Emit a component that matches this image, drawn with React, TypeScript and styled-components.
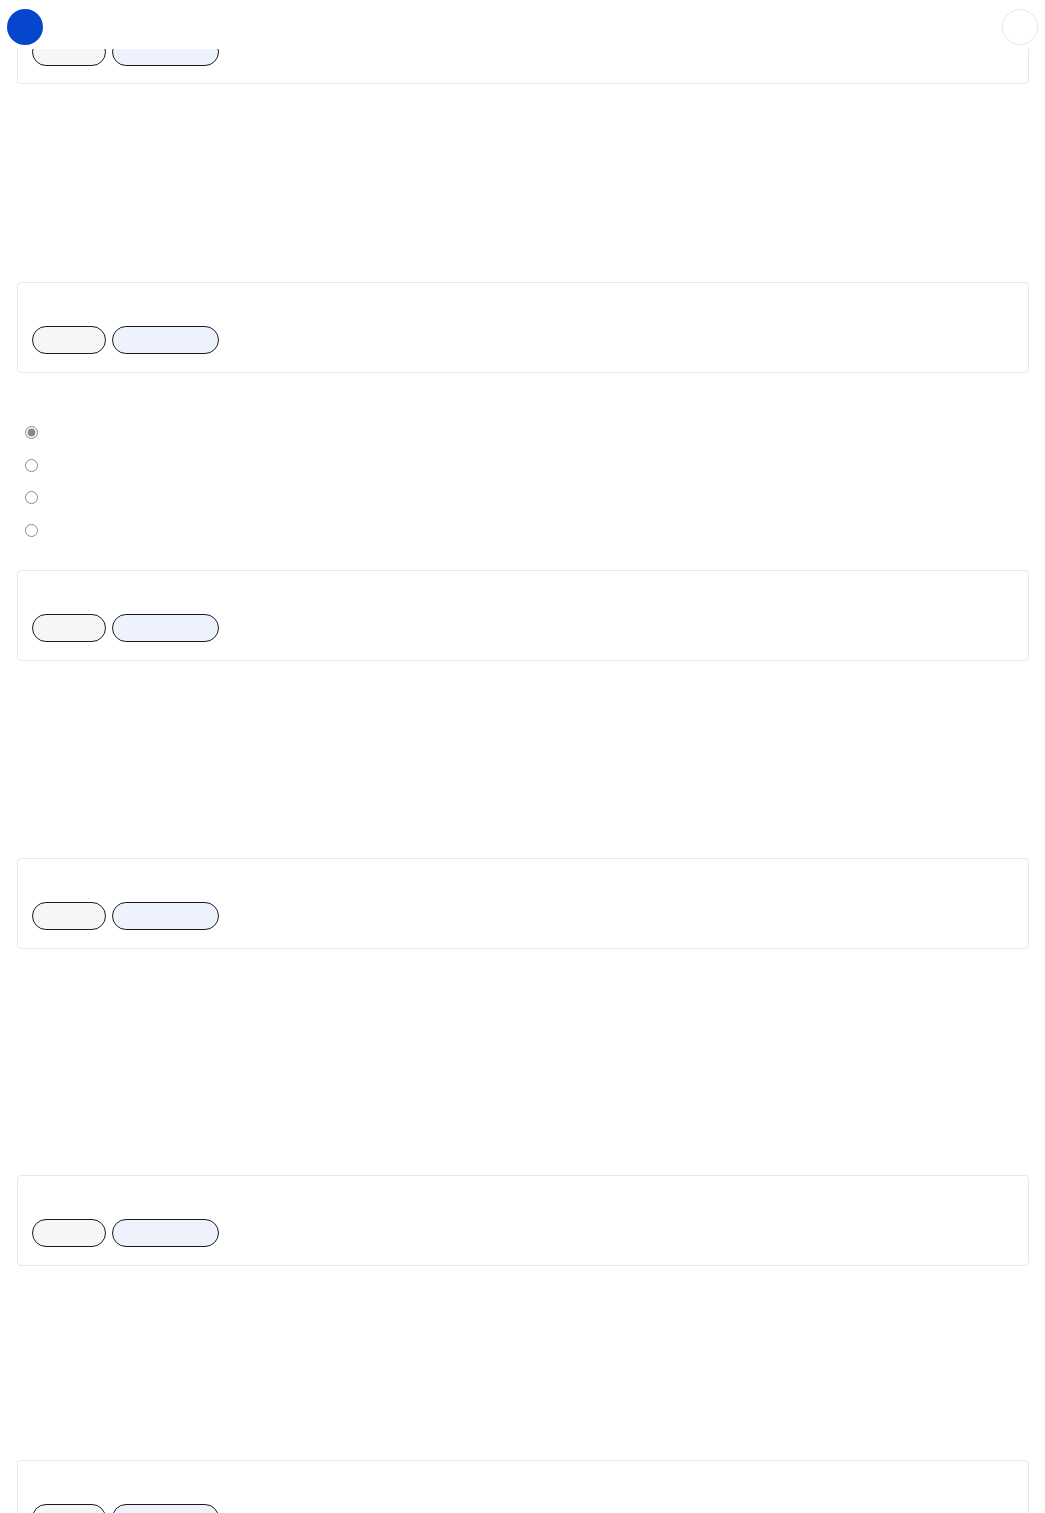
import React from 'react';
import styled, { createGlobalStyle } from 'styled-components';

const GlobalStyle = createGlobalStyle`
	html, body {
		margin: 0;
		padding: 0;
		background: #ffffff;
		font-family: 'Noto Sans', 'Liberation Sans', sans-serif;
	}
`;

const Header = () => (
	<StyledHeader>
		<Avatar />
		<ProfileButton />
	</StyledHeader>
);

const Card = ({ first = false }: { first?: boolean }) => (
	<StyledCard $first={first}>
		<CardTitle />
		<ButtonRow>
			<PillButton $variant="default" $width={74} />
			<PillButton $variant="primary" $width={107} />
		</ButtonRow>
	</StyledCard>
);

const OPTIONS = ['one', 'two', 'three', 'four'];

const App = () => {
	return (
		<>
			<GlobalStyle />
			<Header />
			<Page>
				<Card first />
				<Spacer $height={198} />
				<Card />
				<RadioSection>
					{OPTIONS.map((option, index) => (
						<RadioRow key={`radio-${option}`}>
							<input type="radio" name="choice" defaultChecked={index === 0} />
						</RadioRow>
					))}
				</RadioSection>
				<Card />
				<Spacer $height={197} />
				<Card />
				<Spacer $height={226} />
				<Card />
				<Spacer $height={194} />
				<Card />
			</Page>
		</>
	);
};

const StyledHeader = styled.header`
	position: fixed;
	top: 0;
	left: 0;
	right: 0;
	z-index: 10;
	height: 49px;
	box-sizing: border-box;
	padding: 9px 7px 0 7px;
	display: flex;
	align-items: flex-start;
	justify-content: space-between;
	background: #ffffff;
`;

const Avatar = styled.div`
	width: 36px;
	height: 36px;
	border-radius: 50%;
	background: #0646cd;
`;

const ProfileButton = styled.div`
	width: 36px;
	height: 36px;
	box-sizing: border-box;
	border-radius: 50%;
	border: 1px solid #e6e6e6;
	background: #ffffff;
`;

const Page = styled.main`
	display: flex;
	flex-direction: column;
	padding: 0 16px 0 17px;
`;

const StyledCard = styled.section<{ $first: boolean }>`
	display: flex;
	flex-direction: column;
	box-sizing: border-box;
	border: 1px solid #e8e8e8;
	border-radius: 4px;
	background: #ffffff;
	padding: ${({ $first }) => ($first ? '8px 14px 17px' : '14px 14px 18px')};
`;

const CardTitle = styled.div`
	height: 29px;
`;

const ButtonRow = styled.div`
	display: flex;
	gap: 6px;
`;

const PillButton = styled.button<{ $variant: 'default' | 'primary'; $width: number }>`
	width: ${({ $width }) => $width}px;
	height: 28px;
	box-sizing: border-box;
	padding: 0;
	border: 1px solid #1a1a1a;
	border-radius: 999px;
	background: ${({ $variant }) => ($variant === 'primary' ? '#edf2fd' : '#f6f6f6')};
	cursor: pointer;
`;

const Spacer = styled.div<{ $height: number }>`
	height: ${({ $height }) => $height}px;
`;

const RadioSection = styled.div`
	height: 197px;
	box-sizing: border-box;
	padding: 53px 0 0 8px;
	display: flex;
	flex-direction: column;
`;

const RadioRow = styled.label`
	height: 32.5px;
	display: flex;
	align-items: flex-start;

	input {
		margin: 0;
		width: 13px;
		height: 13px;
		accent-color: #757575;
		opacity: 0.85;
	}
`;

export default App;
